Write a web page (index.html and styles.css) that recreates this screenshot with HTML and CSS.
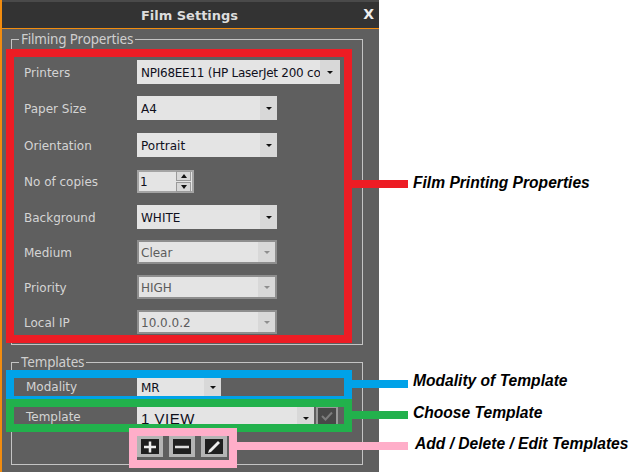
FILE: index.html
```html
<!DOCTYPE html>
<html lang="en">
<head>
    <meta charset="UTF-8">
    <title>Film Settings</title>
    <link rel="stylesheet" href="styles.css">
</head>
<body>
    <div class="page">
        <div class="panel">
            <div class="titlebar">
                <span class="title">Film Settings</span>
                <span class="close">X</span>
            </div>
            <fieldset class="group group-props">
                <legend>Filming Properties</legend>
                <div class="row row-first">
                    <label>Printers</label>
                    <div class="combo combo-wide"><span class="value">NPI68EE11 (HP LaserJet 200 co</span><span class="arrow"></span></div>
                </div>
                <div class="row row-12">
                    <label>Paper Size</label>
                    <div class="combo"><span class="value">A4</span><span class="arrow"></span></div>
                </div>
                <div class="row row-13">
                    <label>Orientation</label>
                    <div class="combo"><span class="value">Portrait</span><span class="arrow"></span></div>
                </div>
                <div class="row row-13 row-spin">
                    <label>No of copies</label>
                    <div class="spin">
                        <span class="spin-value">1</span>
                        <span class="spin-btns">
                            <span class="spin-btn"><i class="tri-up"></i></span>
                            <span class="spin-btn"><i class="tri-down"></i></span>
                        </span>
                    </div>
                </div>
                <div class="row row-12">
                    <label>Background</label>
                    <div class="combo"><span class="value">WHITE</span><span class="arrow"></span></div>
                </div>
                <div class="row">
                    <label>Medium</label>
                    <div class="combo disabled"><span class="value">Clear</span><span class="arrow"></span></div>
                </div>
                <div class="row">
                    <label>Priority</label>
                    <div class="combo disabled"><span class="value">HIGH</span><span class="arrow"></span></div>
                </div>
                <div class="row">
                    <label>Local IP</label>
                    <div class="combo disabled"><span class="value">10.0.0.2</span><span class="arrow"></span></div>
                </div>
            </fieldset>
            <fieldset class="group group-templates">
                <legend>Templates</legend>
                <div class="row row-modality">
                    <label>Modality</label>
                    <div class="combo combo-small"><span class="value">MR</span><span class="arrow"></span></div>
                </div>
                <div class="row row-template">
                    <label>Template</label>
                    <div class="combo combo-template"><span class="value">1 VIEW</span><span class="arrow"></span></div>
                    <div class="check-btn">
                        <svg width="16" height="14" viewBox="0 0 16 14"><path d="M3 7l3.500 3.500L13 3.500" fill="none" stroke="#7c7c7c" stroke-width="2"/></svg>
                    </div>
                </div>
                <div class="tool-row">
                    <div class="tool-btn"><svg width="18" height="16" viewBox="0 0 18 16"><path d="M9 2.500v11M3 8h12" stroke="#eee" stroke-width="2.500"/></svg></div>
                    <div class="tool-btn"><svg width="18" height="16" viewBox="0 0 18 16"><path d="M2 8h14" stroke="#ddd" stroke-width="2.500"/></svg></div>
                    <div class="tool-btn"><svg width="18" height="16" viewBox="0 0 18 16"><path d="M3 14l1-3L13 2l2 2-9 9z" fill="#eee"/></svg></div>
                </div>
            </fieldset>
        </div>

        <!-- annotations drawn on top of the screenshot -->
        <div class="mark mark-red"></div>
        <div class="mark mark-blue"></div>
        <div class="mark mark-green"></div>
        <div class="mark mark-pink"></div>
        <div class="lead lead-red"></div>
        <div class="lead lead-blue"></div>
        <div class="lead lead-green"></div>
        <div class="lead lead-pink"></div>
        <div class="note note-red">Film Printing Properties</div>
        <div class="note note-blue">Modality of Template</div>
        <div class="note note-green">Choose Template</div>
        <div class="note note-pink">Add / Delete / Edit Templates</div>
    </div>
</body>
</html>
```

FILE: styles.css
```css
body {
    margin: 0;
    background: #fff;
    font-family: "DejaVu Sans", sans-serif;
    font-size: 12px;
}

.page {
    position: relative;
    width: 634px;
    height: 472px;
    overflow: hidden;
}

.panel {
    width: 379px;
    height: 472px;
    box-sizing: border-box;
    background: #5f5f5f;
    border-left: 2px solid #f28c0f;
    display: flex;
    flex-direction: column;
    overflow: hidden;
}

.titlebar {
    height: 26px;
    flex: none;
    background: #333;
    border-top: 2px solid #4a4a4a;
    border-bottom: 1px solid #f28c0f;
    display: flex;
    align-items: center;
    justify-content: center;
    position: relative;
    color: #ddd;
    font-weight: bold;
}

.title {
    font-size: 13px;
    margin-left: -2px;
}

.close {
    position: absolute;
    right: 5px;
    top: 4px;
    font-size: 14px;
    color: #eee;
}

.group {
    margin: 0 16px 0 9px;
    padding: 0;
    border: 1px solid #c4c4c4;
    min-width: 0;
}

.group legend {
    margin-left: 7px;
    padding: 0 2px;
    color: #cfcfcf;
    font-family: "Noto Sans", sans-serif;
    font-size: 13.500px;
    letter-spacing: -0.2px;
    line-height: 17px;
}

.group-props {
    margin-top: 2px;
    height: 314px;
    box-sizing: border-box;
}

.group-templates {
    margin-top: 9px;
    height: 111px;
    box-sizing: border-box;
}

.row {
    display: flex;
    align-items: center;
    height: 24px;
    margin-top: 11px;
    padding-left: 12px;
}

.row label {
    width: 113px;
    flex: none;
    padding-top: 1px;
    color: #d4d4d4;
}

.row-first { margin-top: 12px; }
.row-12 { margin-top: 12px; }
.row-13 { margin-top: 13px; }
.row-spin { height: 23px; }

.combo {
    width: 140px;
    height: 24px;
    box-sizing: border-box;
    background: #e4e4e4;
    display: flex;
    align-items: center;
    color: #10101c;
}

.combo-wide { width: 203px; }
.combo-small { width: 84px; }

.combo .value {
    flex: 1;
    padding-left: 4px;
    padding-top: 2px;
    white-space: nowrap;
    overflow: hidden;
}

.combo-wide .value {
    letter-spacing: -0.25px;
}

.arrow {
    width: 17px;
    height: 100%;
    flex: none;
    background: #d8d8d8;
    display: flex;
    align-items: center;
    justify-content: center;
}

.combo-wide .arrow {
    width: 20px;
}

.arrow::after {
    content: "";
    border-left: 3px solid transparent;
    border-right: 3px solid transparent;
    border-top: 3px solid #111;
}

.combo.disabled {
    border: 2px solid #8e8e8e;
    color: #5c5c5c;
    background: #e4e4e4;
}

.combo.disabled .value {
    padding-left: 2px;
}

.combo.disabled .arrow::after {
    border-top-color: #8e8e8e;
}

.spin {
    width: 57px;
    height: 23px;
    box-sizing: border-box;
    border: 2px solid #a4a4a4;
    background: #e4e4e4;
    display: flex;
    align-items: center;
    color: #10101c;
}

.spin-value {
    flex: 1;
    padding-left: 1px;
}

.spin-btns {
    width: 15px;
    margin-right: 1px;
    display: flex;
    flex-direction: column;
    gap: 1px;
}

.spin-btn {
    height: 8px;
    border: 1px solid #9a9a9a;
    background: #d8d8d8;
    display: flex;
    align-items: center;
    justify-content: center;
}

.tri-up {
    border-left: 3px solid transparent;
    border-right: 3px solid transparent;
    border-bottom: 4px solid #111;
}

.tri-down {
    border-left: 3px solid transparent;
    border-right: 3px solid transparent;
    border-top: 4px solid #111;
}

.row-modality {
    margin-top: 4px;
    padding-left: 14px;
}

.row-modality label {
    width: 111px;
    padding-top: 0;
}

.row-template {
    margin-top: 7px;
    padding-left: 14px;
}

.row-template label {
    width: 111px;
    padding-top: 0;
    padding-bottom: 2px;
}

.combo-template {
    width: 177px;
}

.combo-template .value {
    font-family: "Liberation Sans", sans-serif;
    font-size: 15px;
    letter-spacing: 0.5px;
    padding-top: 1px;
}

.combo-template .arrow {
    margin-left: auto;
}

.check-btn {
    width: 22px;
    height: 24px;
    margin-left: 2px;
    box-sizing: border-box;
    border: 2px solid #999;
    border-radius: 1px;
    background: #484848;
    display: flex;
    align-items: flex-start;
    justify-content: center;
    padding-top: 1px;
}

.tool-row {
    display: flex;
    gap: 6px;
    margin-top: 6px;
    padding-left: 125px;
}

.tool-btn {
    width: 26px;
    height: 21px;
    box-sizing: border-box;
    border: 3px solid #b4b4b4;
    border-left-width: 4px;
    border-right-width: 4px;
    background: #1f1f1f;
    display: flex;
    align-items: center;
    justify-content: center;
}

/* annotations */
.mark {
    position: absolute;
    box-sizing: border-box;
    border: 8px solid;
}

.mark-red { left: 6px; top: 49px; width: 346px; height: 294px; border-color: #ed1c24; }
.mark-blue { left: 6px; top: 370px; width: 346px; height: 29px; border-color: #00a2e8; border-bottom-width: 3px; }
.mark-green { left: 6px; top: 399px; width: 346px; height: 33px; border-color: #22b14c; }
.mark-pink { left: 129px; top: 428px; width: 108px; height: 40px; border-color: #ffaec9; }

.lead {
    position: absolute;
    height: 8px;
    left: 352px;
    width: 56px;
}

.lead-red { top: 180px; background: #ed1c24; }
.lead-blue { top: 380px; background: #00a2e8; }
.lead-green { top: 411px; background: #22b14c; }
.lead-pink { top: 442px; left: 237px; width: 171px; background: #ffaec9; }

.note {
    position: absolute;
    left: 413px;
    color: #000;
    font-family: "Liberation Sans", sans-serif;
    font-size: 15.600px;
    font-weight: bold;
    font-style: italic;
    line-height: 16px;
    white-space: nowrap;
}

.note-red { top: 175px; }
.note-blue { top: 373px; }
.note-green { top: 405px; }
.note-pink { top: 436px; left: 415px; }
```
